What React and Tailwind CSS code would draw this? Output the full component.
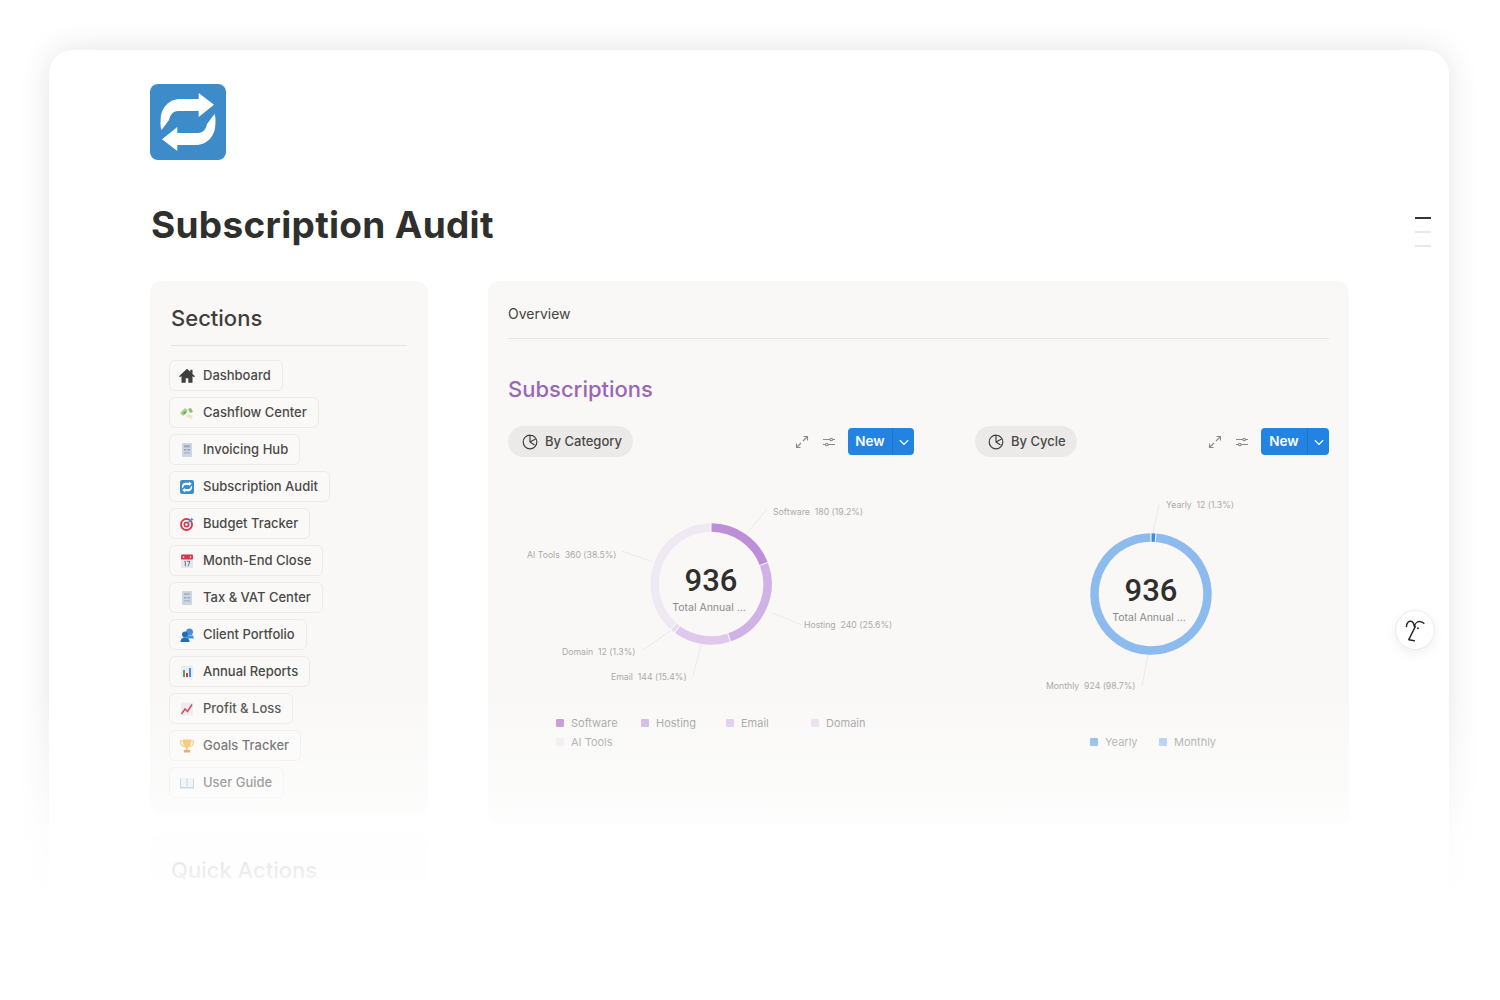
import React from "react";

const RepeatGlyph = ({ fill = "#fff" }) => (
  <>
    <path fill={fill} d="M48.7 9 64 20.7 48.7 33v-6H28c-5 0-8 4-9 9l-7.5 10C10 42 10.5 38 10.7 35 11 24 19 15 30 15h18.7z" />
    <path fill={fill} transform="rotate(180 38 38)" d="M48.7 9 64 20.7 48.7 33v-6H28c-5 0-8 4-9 9l-7.5 10C10 42 10.5 38 10.7 35 11 24 19 15 30 15h18.7z" />
  </>
);

const Logo = () => (
  <div className="w-[76px] h-[76px] rounded-lg bg-[#3d8bc9]">
    <svg viewBox="0 0 76 76" className="w-full h-full"><RepeatGlyph /></svg>
  </div>
);

const S = ({ children }) => <svg viewBox="0 0 16 16" className="w-4 h-4 shrink-0">{children}</svg>;

const icons = {
  home: <S><path fill="#3f3f3f" d="M8 .8 0 8.200l1.100 1.100L2.500 8v6.800h4.200v-4.500h2.600v4.500h4.200V8l1.400 1.300L16 8.200l-2.500-2.300V1.800h-2.200v2z" /></S>,
  cash: <S><path fill="#a8d08d" d="m1 8 5-5 3 3-5 5z" /><path fill="#6ca650" d="m4 8 2-2 1.500 1.500-2 2z" /><path fill="#ece4c4" d="m7 11 2-2 5 2-2 3z" /><path fill="#8cc070" d="m9 4 3-1 2 4-3 1z" /></S>,
  invoice: <S><rect x="3" y="1" width="10" height="14" rx="1" fill="#ccd6e2" /><rect x="5" y="3" width="6" height="2.500" fill="#9fb0c2" /><rect x="5" y="7" width="2.500" height="1.500" fill="#8fa2b6" /><rect x="8.500" y="7" width="2.500" height="1.500" fill="#8fa2b6" /><rect x="5" y="10" width="6" height="1.500" fill="#a8b8c8" /></S>,
  sub: <S><rect x="1" y="1" width="14" height="14" rx="2" fill="#3d8bc9" /><svg x="1" y="1" width="14" height="14" viewBox="0 0 76 76"><RepeatGlyph /></svg></S>,
  target: <S><circle cx="7.500" cy="8.500" r="6.500" fill="#d8394a" /><circle cx="7.500" cy="8.500" r="4.600" fill="#fff" /><circle cx="7.500" cy="8.500" r="3" fill="#d8394a" /><circle cx="7.500" cy="8.500" r="1.300" fill="#fff" /><path d="M8 8 13 3" stroke="#4a90d9" strokeWidth="1.400" /><path fill="#4a90d9" d="m12 1.500 2.600 1.900-2 1.400z" /></S>,
  cal: <S><rect x="2" y="1.500" width="12" height="13.500" rx="1" fill="#e4e8ee" /><rect x="2" y="1.500" width="12" height="5" rx="1" fill="#d8394a" /><circle cx="4.500" cy="4" r=".8" fill="#fff" /><circle cx="11.500" cy="4" r=".8" fill="#fff" /><path d="M5.300 8.300h1v5M8 8.300h3l-2 5" stroke="#56657a" strokeWidth=".9" fill="none" /></S>,
  tax: <S><rect x="3" y="1" width="10" height="14" rx="1" fill="#ccd6e2" /><rect x="5" y="3" width="6" height="2" fill="#a8b8c8" /><rect x="5" y="7" width="2.500" height="1.500" fill="#97a8ba" /><rect x="8.500" y="7" width="2.500" height="1.500" fill="#97a8ba" /><rect x="5" y="10" width="6" height="1.500" fill="#a8b8c8" /></S>,
  client: <S><circle cx="10.500" cy="5" r="3.500" fill="#4a90d9" /><path fill="#4a90d9" d="M7 8.500h7l1 3H8z" /><circle cx="6" cy="7.500" r="3" fill="#1f6fb5" /><path fill="#1f6fb5" d="M1.500 15c0-3 1.500-4.500 4.500-4.500S10.500 12 10.500 15z" /></S>,
  bar: <S><rect x="2" y="1.500" width="12" height="13" fill="#e9edf2" /><rect x="4" y="6" width="2" height="7" fill="#5ea35a" /><rect x="7" y="9" width="2" height="4" fill="#d8394a" /><rect x="10" y="4" width="2" height="9" fill="#4a90d9" /></S>,
  pl: <S><rect x="2" y="1.500" width="12" height="13" fill="#e9edf2" /><path d="m2.500 13 3.500-5 2.500 2.500L13 3.500" stroke="#d8394a" strokeWidth="1.500" fill="none" /></S>,
  trophy: <S><path d="M4 3H1.500c0 3.500 1 5 3.500 5.500M12 3h2.500c0 3.500-1 5-3.500 5.500" stroke="#f2b64a" strokeWidth="1.100" fill="none" /><path fill="#f5bb50" d="M3.800 1.500h8.400c0 5-1 7.500-3.200 8.500v2H7v-2C4.800 9 3.800 6.500 3.800 1.500z" /><rect x="4.800" y="12" width="6.400" height="2.500" fill="#d98a3c" /></S>,
  book: <S><path fill="#8fb5d8" d="M1 3.500h14v10H1z" /><path fill="#e8edf2" d="M2 3h5.500v9H2zM8.500 3H14v9H8.500z" /></S>,
};

const items = [
  ["home", "Dashboard"], ["cash", "Cashflow Center"], ["invoice", "Invoicing Hub"], ["sub", "Subscription Audit"],
  ["target", "Budget Tracker"], ["cal", "Month-End Close"], ["tax", "Tax & VAT Center"], ["client", "Client Portfolio"],
  ["bar", "Annual Reports"], ["pl", "Profit & Loss"], ["trophy", "Goals Tracker"], ["book", "User Guide"],
];

const PieIcon = () => (
  <svg viewBox="0 0 16 16" className="w-4 h-4" fill="none" stroke="#3f3f3f" strokeWidth="1.200">
    <path d="M8 1.200a6.800 6.800 0 1 1-6.800 6.800A6.800 6.800 0 0 1 8 1.200V8l4.500 3" /><path d="M8 8l5.600-3" />
  </svg>
);
const ExpandIcon = () => (
  <svg viewBox="0 0 14 14" className="w-[14px] h-[14px]" fill="none" stroke="#8a8a8a" strokeWidth="1.100">
    <path d="M8 6l4.500-4.500M8.500 1.500h4v4M6 8l-4.500 4.500M1.500 8.500v4h4" />
  </svg>
);
const SlidersIcon = () => (
  <svg viewBox="0 0 14 14" className="w-[14px] h-[14px]" fill="none" stroke="#8a8a8a" strokeWidth="1.100">
    <path d="M1 4.500h7M10.500 4.500H13M1 9.500h2.500M6 9.500h7" /><circle cx="9.200" cy="4.500" r="1.300" /><circle cx="4.800" cy="9.500" r="1.300" />
  </svg>
);
const Chevron = () => (
  <svg viewBox="0 0 12 12" className="w-[14px] h-[14px]" fill="none" stroke="#fff" strokeWidth="1.100"><path d="m2.500 4.500 3.500 3.500 3.500-3.500" /></svg>
);

const Toolbar = ({ label, pillClass, newClass }) => (
  <div className="flex items-center justify-between h-[31px]">
    <div className={`flex items-center gap-[7px] h-[31px] rounded-full bg-[#ebeae8] text-[13px] font-medium text-[#4a4a48] ${pillClass}`}>
      <PieIcon />
      <span>{label}</span>
    </div>
    <div className="flex items-center">
      <ExpandIcon />
      <span className="ml-[13px] flex"><SlidersIcon /></span>
      <div className="ml-[12px] flex items-center h-[27px] rounded-[4px] bg-[#2383e2] text-white text-[13.500px] font-semibold overflow-hidden">
        <span className={`text-center ${newClass}`}>New</span>
        <span className="w-[22px] h-full flex items-center justify-center border-l border-[#1f74c9]"><Chevron /></span>
      </div>
    </div>
  </div>
);

function arc(cx, cy, r, a0, a1) {
  const p = (a) => [cx + r * Math.sin(a * 2 * Math.PI), cy - r * Math.cos(a * 2 * Math.PI)];
  const [x0, y0] = p(a0);
  const [x1, y1] = p(a1);
  return `M${x0} ${y0}A${r} ${r} 0 ${a1 - a0 > 0.5 ? 1 : 0} 1 ${x1} ${y1}`;
}

const Donut = ({ cx, cy, segs, viewBox, lines, labels, w }) => {
  let at = 0;
  return (
    <svg viewBox={viewBox} style={{ width: w, height: 210 }} className="block" fontFamily="Inter, sans-serif">
      {lines.map((d, i) => <path key={i} d={d} stroke="#ebeae8" strokeWidth="1" fill="none" />)}
      {segs.map(([v, c], i) => {
        const a0 = at;
        at += v;
        return <path key={i} d={arc(cx, cy, 56.500, a0 + 0.0015, a0 + v - 0.0015)} stroke={c} strokeWidth="8.500" fill="none" />;
      })}
      {labels.map(([x, y, t], i) => <text key={i} x={x} y={y} fontSize="8.700" fill="#aaaaa8" className="whitespace-pre">{t}</text>)}
      <text x={cx} y={cy + 7} textAnchor="middle" fontSize="31" fontWeight="500" fill="#2f2f2d" fontFamily="Roboto, sans-serif">936</text>
      <text x={cx - 2} y={cy + 27} textAnchor="middle" fontSize="10.500" fill="#8b8b89">Total Annual ...</text>
    </svg>
  );
};

const Legend = ({ c, t, className = "" }) => (
  <div className={`flex items-center gap-[7px] text-[11px] text-[#9c9c9a] h-[19px] ${className}`}>
    <span className="w-2 h-2 rounded-[1px] -mt-0.5" style={{ background: c }} />
    <span>{t}</span>
  </div>
);

export default function App() {
  return (
    <div className="relative w-[1500px] h-[1000px] overflow-hidden bg-white font-['Inter',sans-serif] text-[#37352f]">
      <div className="relative ml-[49px] mt-[50px] w-[1400px] h-[900px] rounded-[24px] bg-white shadow-[0_0_32px_rgba(0,0,0,0.11)] pt-[34px] pl-[101px] pr-[100px] inline-block align-top">
        <Logo />
        <h1 className="mt-[41px] ml-px h-[48px] leading-[48px] text-[37px] font-bold text-[#2f2f2d] tracking-[0.3px]">Subscription Audit</h1>
        <div className="mt-[32px] flex gap-[60px] items-start">
          <aside className="w-[278px] shrink-0 flex flex-col gap-[18px]">
            <div className="h-[534px] rounded-xl bg-[#f9f8f7] px-[21px] pt-[21px]">
              <h2 className="h-[32px] leading-[32px] text-[22px] font-medium text-[#3f3e3a]">Sections</h2>
              <div className="mt-[11px] border-t border-[#e6e5e3]" />
              <nav className="mt-[14px] -ml-0.5 flex flex-col items-start gap-[6px]">
                {items.map(([k, t]) => (
                  <div key={t} className="flex items-center gap-2 h-[31px] pl-[9px] pr-[11px] rounded-md border border-[#ecebe9] bg-[#faf9f8] text-[13px] font-medium text-[#4a4a48]">
                    {icons[k]}
                    <span>{t}</span>
                  </div>
                ))}
              </nav>
            </div>
            <div className="h-[120px] rounded-xl bg-[#f9f8f7] px-[21px] pt-[21px]">
              <h2 className="h-[32px] leading-[32px] text-[22px] font-medium text-[#3f3e3a]">Quick Actions</h2>
            </div>
          </aside>
          <main className="w-[861px] shrink-0 h-[544px] rounded-xl bg-[#f9f8f7] px-[20px] pt-[22px]">
            <div className="h-[21px] leading-[21px] text-[14px] text-[#45443f]">Overview</div>
            <div className="mt-[14px] border-t border-[#e6e5e3]" />
            <h2 className="mt-[34px] h-[32px] leading-[32px] text-[22px] font-medium text-[#9a67b8]">Subscriptions</h2>
            <div className="mt-[21px] flex justify-between">
              <section className="w-[406px]">
                <Toolbar label="By Category" pillClass="w-[125px] pl-[14px]" newClass="w-[44px]" />
                <div className="mt-[33px]">
                  <Donut
                    w={406}
                    cx={711}
                    cy={584}
                    viewBox="508 490 406 210"
                    segs={[[0.192, "#bd8fd8"], [0.256, "#d0b2e6"], [0.154, "#dfc8ec"], [0.013, "#e8dcef"], [0.385, "#efe9f3"]]}
                    lines={["M767 509 748 532", "M622 551 653 562", "M773 613 802 625", "M670 631 643 650", "M701 645 693 676"]}
                    labels={[[773, 515, "Software  180 (19.2%)"], [527, 558, "AI Tools  360 (38.5%)"], [804, 628, "Hosting  240 (25.6%)"], [562, 655, "Domain  12 (1.3%)"], [611, 680, "Email  144 (15.4%)"]]}
                  />
                </div>
                <div className="mt-[14px] ml-[48px] grid grid-cols-[85px_85px_85px_85px]">
                  <Legend c="#bd8fd8" t="Software" />
                  <Legend c="#d0b2e6" t="Hosting" />
                  <Legend c="#dfc8ec" t="Email" />
                  <Legend c="#e8dcef" t="Domain" />
                  <Legend c="#efe9f3" t="AI Tools" />
                </div>
              </section>
              <section className="w-[354px]">
                <Toolbar label="By Cycle" pillClass="w-[102px] pl-[13px]" newClass="w-[46px]" />
                <div className="mt-[33px]">
                  <Donut
                    w={354}
                    cx={1151}
                    cy={594}
                    viewBox="975 490 354 210"
                    segs={[[0.013, "#3f8fe0"], [0.987, "#8dbbee"]]}
                    lines={["M1159 505 1153 533", "M1148 655 1142 686"]}
                    labels={[[1166, 508, "Yearly  12 (1.3%)"], [1046, 689, "Monthly  924 (98.7%)"]]}
                  />
                </div>
                <div className="mt-[33px] ml-[115px] flex">
                  <Legend c="#7aaeea" t="Yearly" className="w-[69px]" />
                  <Legend c="#a0c6f2" t="Monthly" />
                </div>
              </section>
            </div>
          </main>
        </div>
        <div className="absolute left-[1366px] top-[167px] flex flex-col gap-[12.500px]">
          <span className="block w-4 h-[1.500px] bg-[#37352f]" />
          <span className="block w-4 h-[1.500px] bg-[#e8e8e6]" />
          <span className="block w-4 h-[1.500px] bg-[#e8e8e6]" />
        </div>
        <div className="absolute left-[1346px] top-[560px] w-10 h-10 rounded-full bg-white border border-[#ebebe9] shadow-[0_4px_12px_rgba(0,0,0,0.06)] flex items-center justify-center">
          <svg viewBox="80 55 60 70" className="w-[20px] h-[23px]" fill="none" stroke="#2a2a2a" strokeWidth="4.500" strokeLinecap="round" strokeLinejoin="round">
            <path d="M84 78C84 66 92 60 98 62c6 2 9 8 10 16 2-10 10-16 18-15 4 1 8 2 11 5" />
            <path d="M111 78 91 118l17 3" />
            <circle cx="119" cy="83" r="3" fill="#2a2a2a" stroke="none" />
          </svg>
        </div>
      </div>
      <div className="absolute inset-x-0 top-[690px] bottom-0 bg-[linear-gradient(to_bottom,rgba(255,255,255,0)_0px,rgba(255,255,255,0.5)_100px,rgba(255,255,255,0.8)_135px,rgba(255,255,255,0.9)_180px,#fff_210px)]" />
    </div>
  );
}
